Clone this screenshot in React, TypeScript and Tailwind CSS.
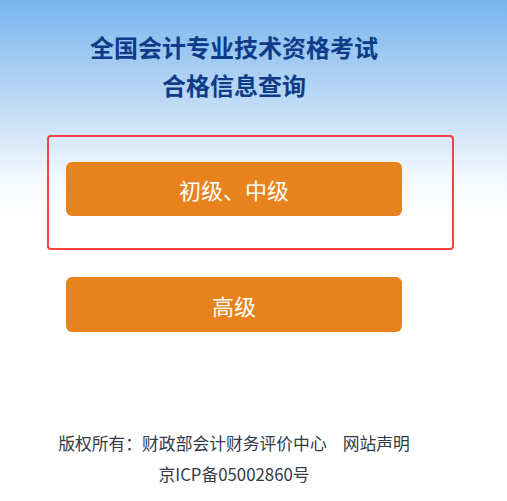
export default function App() {
  return (
    <div
      className="min-h-screen w-full bg-white bg-[linear-gradient(to_bottom,#78b5ee_0px,#c4ddf6_110px,#f4f9fe_180px,#ffffff_215px)] bg-no-repeat"
      style={{ fontFamily: '"Microsoft YaHei", "Noto Sans CJK SC", sans-serif' }}
    >
      <div className="w-[468px] pt-[32px]">
        {/* title */}
        <h1 className="flex flex-col items-center font-bold text-[24px] leading-[30px] text-[#0e3c88]">
          <span>全国会计专业技术资格考试</span>
          <span className="mt-[8px]">合格信息查询</span>
        </h1>

        {/* highlighted level */}
        <div className="mt-[35px] ml-[47px] w-[407px] h-[115px] rounded-[4px] border-2 border-[#fb3f43] pt-[25px] pl-[17px]">
          <button className="w-[336px] h-[54px] rounded-[6px] bg-[#e8821c] text-white text-[22px] leading-none">
            初级、中级
          </button>
        </div>

        <div className="mt-[27px] flex justify-center">
          <button className="w-[336px] h-[55px] rounded-[6px] bg-[#e8821c] text-white text-[22px] leading-none">
            高级
          </button>
        </div>

        {/* footer */}
        <div className="mt-[96px] flex flex-col items-center text-[16.8px] leading-[31px] text-[#333a4a]">
          <p>
            版权所有：财政部会计财务评价中心<span className="ml-[16px]">网站声明</span>
          </p>
          <p>京ICP备05002860号</p>
        </div>
      </div>
    </div>
  );
}
